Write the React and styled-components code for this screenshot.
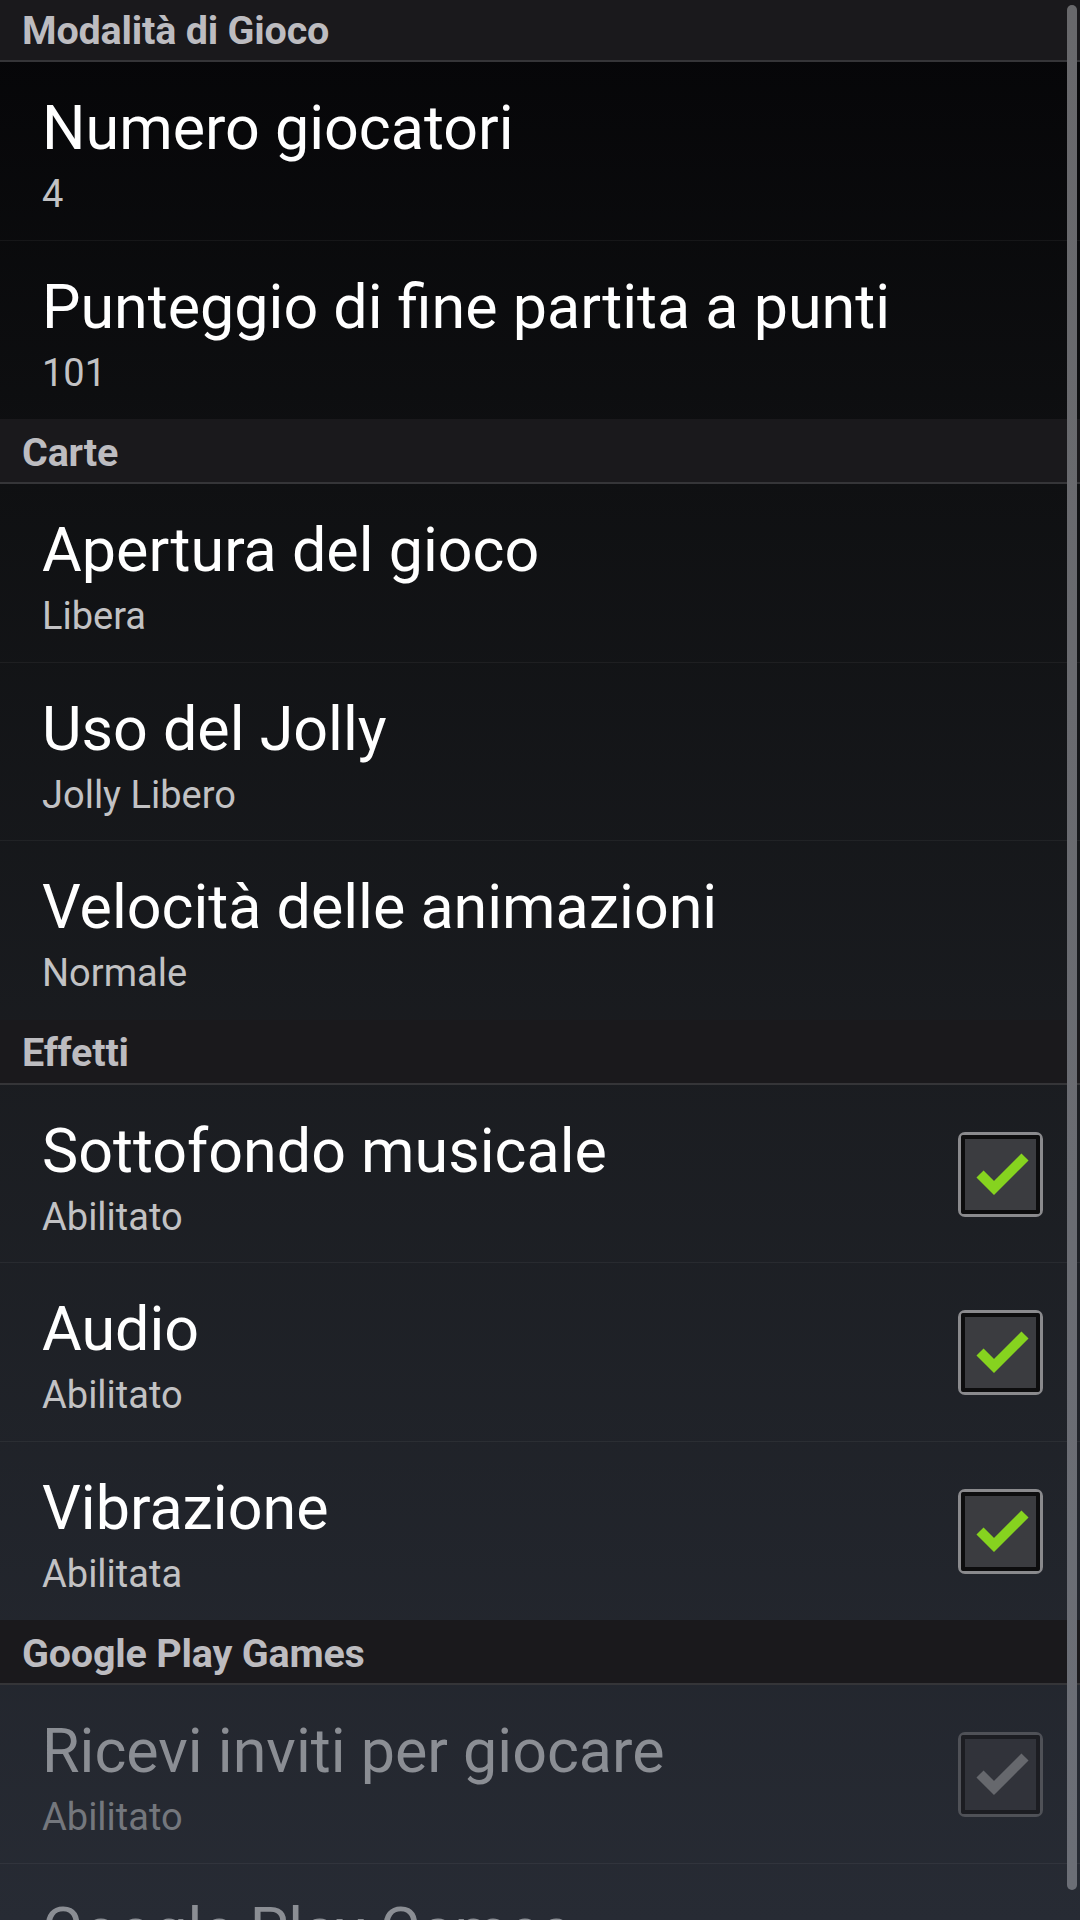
import styled, { createGlobalStyle } from "styled-components";

const GlobalStyle = createGlobalStyle`
  body {
    margin: 0;
    background: #060608;
    font-family: Roboto, "Noto Sans", sans-serif;
  }
`;

const Screen = styled.div`
  position: relative;
  width: 1080px;
  height: 1920px;
  overflow: hidden;
  background: linear-gradient(180deg, #050507 0%, #0f1012 25%, #1a1c20 55%, #272b34 100%);
`;

const List = styled.div`
  display: flex;
  flex-direction: column;
  margin-top: -3px;
`;

const Header = styled.div`
  box-sizing: border-box;
  height: 65px;
  padding: 4px 22px 0;
  display: flex;
  align-items: center;
  background: #1a191c;
  border-bottom: 2px solid #353538;
  font-size: 39.5px;
  font-weight: 700;
  line-height: 58px;
  color: #bdbcc0;
  letter-spacing: -0.2px;
`;

const Row = styled.div`
  box-sizing: border-box;
  height: 178.5px;
  padding: 30px 37px 0 42px;
  display: flex;
  justify-content: space-between;
  border-bottom: 1px solid rgba(255, 255, 255, 0.05);

  &:last-child {
    border-bottom: none;
  }
`;

const Texts = styled.div`
  display: flex;
  flex-direction: column;
  gap: 7px;
`;

const Title = styled.div`
  font-size: 61px;
  line-height: 72px;
  color: ${(p) => (p.$disabled ? "#8b8e94" : "#ffffff")};
  white-space: nowrap;
`;

const Summary = styled.div`
  font-size: 38px;
  line-height: 46px;
  color: ${(p) => (p.$disabled ? "#74777d" : "#c2c2c4")};
`;

const Box = styled.div`
  box-sizing: border-box;
  align-self: center;
  margin-top: -28px;
  width: 85px;
  height: 85px;
  border: 3px solid ${(p) => (p.$disabled ? "#4f5157" : "#8a8a8d")};
  border-radius: 7px;
  display: flex;
`;

const BoxInner = styled.div`
  flex: 1;
  border: 4px solid ${(p) => (p.$disabled ? "#1c1d22" : "#0d0d0e")};
  border-radius: 2px;
  background: ${(p) => (p.$disabled ? "#31333a" : "#3b3c40")};
  display: flex;
  align-items: center;
  justify-content: center;
`;

const Scrollbar = styled.div`
  position: absolute;
  top: 5px;
  right: 3px;
  width: 10px;
  height: 1885px;
  border-radius: 5px;
  background: linear-gradient(180deg, #68686b, #6b6e76);
`;

function Checkbox({ disabled }) {
  return (
    <Box $disabled={disabled}>
      <BoxInner $disabled={disabled}>
        <svg width="71" height="71" viewBox="0 0 71 71">
          <path
            d="M15 35 L29 49 L60 18"
            fill="none"
            stroke={disabled ? "#66686d" : "#86d31f"}
            strokeWidth="10"
            strokeLinejoin="miter"
            strokeLinecap="butt"
          />
        </svg>
      </BoxInner>
    </Box>
  );
}

const sections = [
  {
    name: "Modalità di Gioco",
    items: [
      { title: "Numero giocatori", summary: "4" },
      { title: "Punteggio di fine partita a punti", summary: "101" },
    ],
  },
  {
    name: "Carte",
    items: [
      { title: "Apertura del gioco", summary: "Libera" },
      { title: "Uso del Jolly", summary: "Jolly Libero" },
      { title: "Velocità delle animazioni", summary: "Normale" },
    ],
  },
  {
    name: "Effetti",
    items: [
      { title: "Sottofondo musicale", summary: "Abilitato", check: true },
      { title: "Audio", summary: "Abilitato", check: true },
      { title: "Vibrazione", summary: "Abilitata", check: true },
    ],
  },
  {
    name: "Google Play Games",
    items: [
      { title: "Ricevi inviti per giocare", summary: "Abilitato", check: true, disabled: true },
      { title: "Google Play Games", summary: "", disabled: true },
    ],
  },
];

export default function App() {
  return (
    <>
      <GlobalStyle />
      <Screen>
        <List>
          {sections.map((s) => (
            <div key={s.name}>
              <Header>{s.name}</Header>
              {s.items.map((it) => (
                <Row key={it.title}>
                  <Texts>
                    <Title $disabled={it.disabled}>{it.title}</Title>
                    {it.summary && <Summary $disabled={it.disabled}>{it.summary}</Summary>}
                  </Texts>
                  {it.check && <Checkbox disabled={it.disabled} />}
                </Row>
              ))}
            </div>
          ))}
        </List>
        <Scrollbar />
      </Screen>
    </>
  );
}
